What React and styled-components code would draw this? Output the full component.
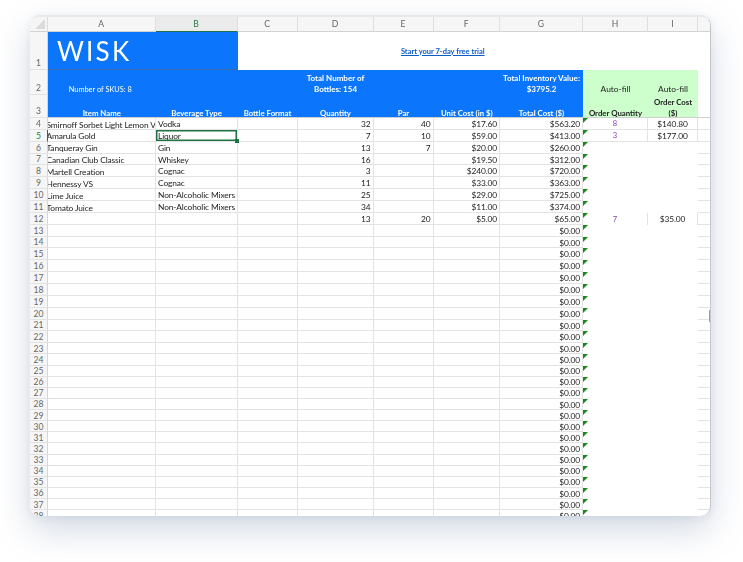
import React from "react";
import styled, { createGlobalStyle, css } from "styled-components";

const columns = ["A", "B", "C", "D", "E", "F", "G", "H", "I"];

const items = {
  4: ["Smirnoff Sorbet Light Lemon Vodka", "Vodka", "32", "40", "$17.60", "$563.20", "8", "$140.80"],
  5: ["Amarula Gold", "Liquor", "7", "10", "$59.00", "$413.00", "3", "$177.00"],
  6: ["Tanqueray Gin", "Gin", "13", "7", "$20.00", "$260.00"],
  7: ["Canadian Club Classic", "Whiskey", "16", "", "$19.50", "$312.00"],
  8: ["Martell Creation", "Cognac", "3", "", "$240.00", "$720.00"],
  9: ["Hennessy VS", "Cognac", "11", "", "$33.00", "$363.00"],
  10: ["Lime Juice", "Non-Alcoholic Mixers", "25", "", "$29.00", "$725.00"],
  11: ["Tomato Juice", "Non-Alcoholic Mixers", "34", "", "$11.00", "$374.00"],
  12: ["", "", "13", "20", "$5.00", "$65.00", "7", "$35.00"],
};

const rowNumbers = Array.from({ length: 35 }, (_, i) => i + 4);

const App = () => {
  return (
    <Page>
      <GlobalStyle />
      <Window>
        <Sheet>
          <Corner />
          {columns.map((c) => (
            <ColHead key={c} $active={c === "B"}>
              {c}
            </ColHead>
          ))}
          <ColHead />

          <RowHead $tall>1</RowHead>
          <LogoCell>WISK</LogoCell>
          <TrialCell>
            <TrialLink href="#">Start your 7-day free trial</TrialLink>
          </TrialCell>
          <Blank $span={2} />

          <RowHead $tall>2</RowHead>
          <BlueCell $light>Number of SKUS: 8</BlueCell>
          <BlueCell $span={2} />
          <BlueCell>
            Total Number of
            <br />
            Bottles: 154
          </BlueCell>
          <BlueCell $span={2} />
          <BlueCell>
            Total Inventory Value:
            <br />
            $3795.2
          </BlueCell>
          <GreenCell>Auto-fill</GreenCell>
          <GreenCell>Auto-fill</GreenCell>
          <Blank />

          <RowHead $tall>3</RowHead>
          <TitleCell><Label>Item Name</Label></TitleCell>
          <TitleCell><Label>Beverage Type</Label></TitleCell>
          <TitleCell><Label>Bottle Format</Label></TitleCell>
          <TitleCell><Label>Quantity</Label></TitleCell>
          <TitleCell><Label>Par</Label></TitleCell>
          <TitleCell><Label>Unit Cost (in $)</Label></TitleCell>
          <TitleCell><Label>Total Cost ($)</Label></TitleCell>
          <GreenCell $bold><Label>Order Quantity</Label></GreenCell>
          <GreenCell $bold>
            <Label>
              Order Cost
              <br />
              ($)
            </Label>
          </GreenCell>
          <Blank $underline />

          {rowNumbers.map((n) => {
            const row = items[n] || ["", "", "", "", "", "$0.00"];
            const boxed = n === 4 || n === 5;
            const hasOrder = boxed || n === 12;
            return (
              <React.Fragment key={n}>
                <RowHead $active={n === 5}>{n}</RowHead>
                <NameCell>{row[0]}</NameCell>
                <TextCell $selected={n === 5}>{row[1]}</TextCell>
                <Cell />
                <Cell $right>{row[2]}</Cell>
                <Cell $right>{row[3]}</Cell>
                <Cell $right>{row[4]}</Cell>
                <Cell $right>{row[5]}</Cell>
                <OrderCell $flag $purple $line={hasOrder} $under={boxed}>
                  {row[6]}
                </OrderCell>
                <OrderCell $line={hasOrder} $under={boxed}>
                  {row[7]}
                </OrderCell>
                <Cell />
              </React.Fragment>
            );
          })}
        </Sheet>
        <ScrollThumb />
      </Window>
    </Page>
  );
};

export default App;

const GlobalStyle = createGlobalStyle`
  body {
    margin: 0;
    background: #fff;
    font-family: "Lato", "Open Sans", sans-serif;
  }
`;

const Page = styled.div`
  width: 743px;
  height: 562px;
  padding: 15px 32px 0 30px;
  box-sizing: border-box;
  overflow: hidden;
`;

const Window = styled.div`
  position: relative;
  width: 681px;
  height: 501px;
  box-sizing: border-box;
  overflow: hidden;
  background: #fff;
  border-top: 2px solid #e8e8e8;
  border-right: 1px solid #c4c6c9;
  border-radius: 10px;
  box-shadow: 0 14px 34px rgba(96, 120, 155, 0.28), 0 2px 8px rgba(96, 120, 155, 0.1);
  filter: blur(0.3px);
`;

const Sheet = styled.div`
  display: grid;
  grid-template-columns: 18px 107.5px 82px 60px 76px 60px 66.5px 83px 65px 50px 13px;
  grid-template-rows: 15px 38px 25px 23px repeat(19, 11.87px) repeat(16, 11.13px);
  font-size: 8.4px;
  letter-spacing: -0.12px;
  color: #222;
`;

const Corner = styled.div`
  background: #f5f5f5;
  border-right: 1px solid #dcdcdc;
  border-bottom: 1px solid #d2d2d2;
  position: relative;
  &::after {
    content: "";
    position: absolute;
    right: 2px;
    bottom: 2px;
    border-style: solid;
    border-width: 0 0 10px 10px;
    border-color: transparent transparent #dadada transparent;
  }
`;

const ColHead = styled.div`
  display: flex;
  align-items: center;
  justify-content: center;
  box-sizing: border-box;
  background: ${(p) => (p.$active ? "#ebebeb" : "#f6f6f6")};
  color: ${(p) => (p.$active ? "#2a7a4c" : "#666")};
  border-right: 1px solid #dedede;
  border-bottom: ${(p) => (p.$active ? "1.5px solid #217346" : "1px solid #d2d2d2")};
  font-size: 8.6px;
  letter-spacing: 0;
`;

const RowHead = styled.div`
  display: flex;
  align-items: ${(p) => (p.$tall ? "flex-end" : "center")};
  justify-content: center;
  box-sizing: border-box;
  padding: ${(p) => (p.$tall ? "0 0 1px" : "1.5px 0 0")};
  background: #f6f6f6;
  color: ${(p) => (p.$active ? "#2a7a4c" : "#666")};
  border-right: ${(p) => (p.$active ? "1.5px solid #217346" : "1px solid #d6d6d6")};
  border-bottom: 1px solid #e2e2e2;
  font-size: 8.6px;
  letter-spacing: 0;
  line-height: 1;
`;

const LogoCell = styled.div`
  grid-column: span 2;
  display: flex;
  align-items: center;
  box-sizing: border-box;
  padding: 1px 0 0 9px;
  background: #0b76fb;
  border-bottom: 1px solid #3a6bb0;
  color: #fff;
  font-size: 26px;
  letter-spacing: 2.2px;
  line-height: 1;
`;

const TrialCell = styled.div`
  grid-column: span 6;
  display: flex;
  align-items: center;
  justify-content: center;
`;

const TrialLink = styled.a`
  color: #0b5cc4;
  font-size: 7.5px;
  font-weight: 700;
  letter-spacing: 0;
  text-decoration: underline;
`;

const Blank = styled.div`
  ${(p) => p.$span && css`grid-column: span ${p.$span};`}
  ${(p) => p.$underline && css`border-bottom: 1px solid #cfcfcf;`}
`;

const BlueCell = styled.div`
  ${(p) => p.$span && css`grid-column: span ${p.$span};`}
  display: flex;
  align-items: flex-end;
  justify-content: center;
  box-sizing: border-box;
  padding-right: ${(p) => (p.$light ? "3px" : "0")};
  text-align: center;
  white-space: nowrap;
  background: #0b76fb;
  color: #fff;
  font-size: ${(p) => (p.$light ? "7.4px" : "8px")};
  font-weight: ${(p) => (p.$light ? 400 : 700)};
  letter-spacing: 0;
  line-height: 11px;
`;

const Label = styled.span`
  display: block;
  margin-bottom: -0.5px;
`;

const TitleCell = styled.div`
  display: flex;
  align-items: flex-end;
  justify-content: center;
  box-sizing: border-box;
  background: #0b76fb;
  box-shadow: inset 0 -1px 0 #cfcfcf;
  color: #fff;
  font-size: 7.8px;
  font-weight: 700;
  letter-spacing: 0;
  line-height: 11px;
  white-space: nowrap;
`;

const GreenCell = styled.div`
  display: flex;
  align-items: flex-end;
  justify-content: center;
  box-sizing: border-box;
  text-align: center;
  white-space: nowrap;
  background: #ccffcc;
  color: #222;
  font-size: ${(p) => (p.$bold ? "7.8px" : "8.4px")};
  font-weight: ${(p) => (p.$bold ? 700 : 400)};
  letter-spacing: 0;
  line-height: 11px;
  ${(p) => p.$bold && css`box-shadow: inset 0 -1px 0 #cfcfcf;`}
`;

const Cell = styled.div`
  display: flex;
  align-items: center;
  justify-content: ${(p) => (p.$right ? "flex-end" : "flex-start")};
  box-sizing: border-box;
  padding: 1.5px 2px 0 0;
  min-width: 0;
  overflow: hidden;
  white-space: nowrap;
  line-height: 1;
  border-right: 1px solid #e3e3e3;
  border-bottom: 1px solid #e3e3e3;
`;

const NameCell = styled(Cell)`
  display: block;
  padding: 1.5px 0 0;
  text-indent: -1.5px;
  line-height: 10px;
`;

const TextCell = styled(Cell)`
  padding-left: 2.5px;
  ${(p) =>
    p.$selected &&
    css`
      position: relative;
      overflow: visible;
      box-shadow: inset 0 0 0 1.5px #217346;
      &::after {
        content: "";
        position: absolute;
        right: -2px;
        bottom: -2px;
        width: 4px;
        height: 4px;
        background: #217346;
      }
    `}
`;

const OrderCell = styled.div`
  position: relative;
  display: flex;
  align-items: center;
  justify-content: center;
  box-sizing: border-box;
  padding-top: 1.5px;
  line-height: 1;
  ${(p) => p.$line && css`border-right: 1px solid #e3e3e3;`}
  ${(p) => p.$under && css`border-bottom: 1px solid #e3e3e3;`}
  ${(p) =>
    p.$purple &&
    css`
      color: #7f3fae;
      font-size: 7.6px;
    `}
  ${(p) =>
    p.$flag &&
    css`
      &::before {
        content: "";
        position: absolute;
        left: 0;
        top: 0;
        border-style: solid;
        border-width: 5px 5px 0 0;
        border-color: #15891a transparent transparent transparent;
      }
    `}
`;

const ScrollThumb = styled.div`
  position: absolute;
  right: 0;
  top: 293px;
  width: 1px;
  height: 12px;
  background: #9a9c9f;
`;
